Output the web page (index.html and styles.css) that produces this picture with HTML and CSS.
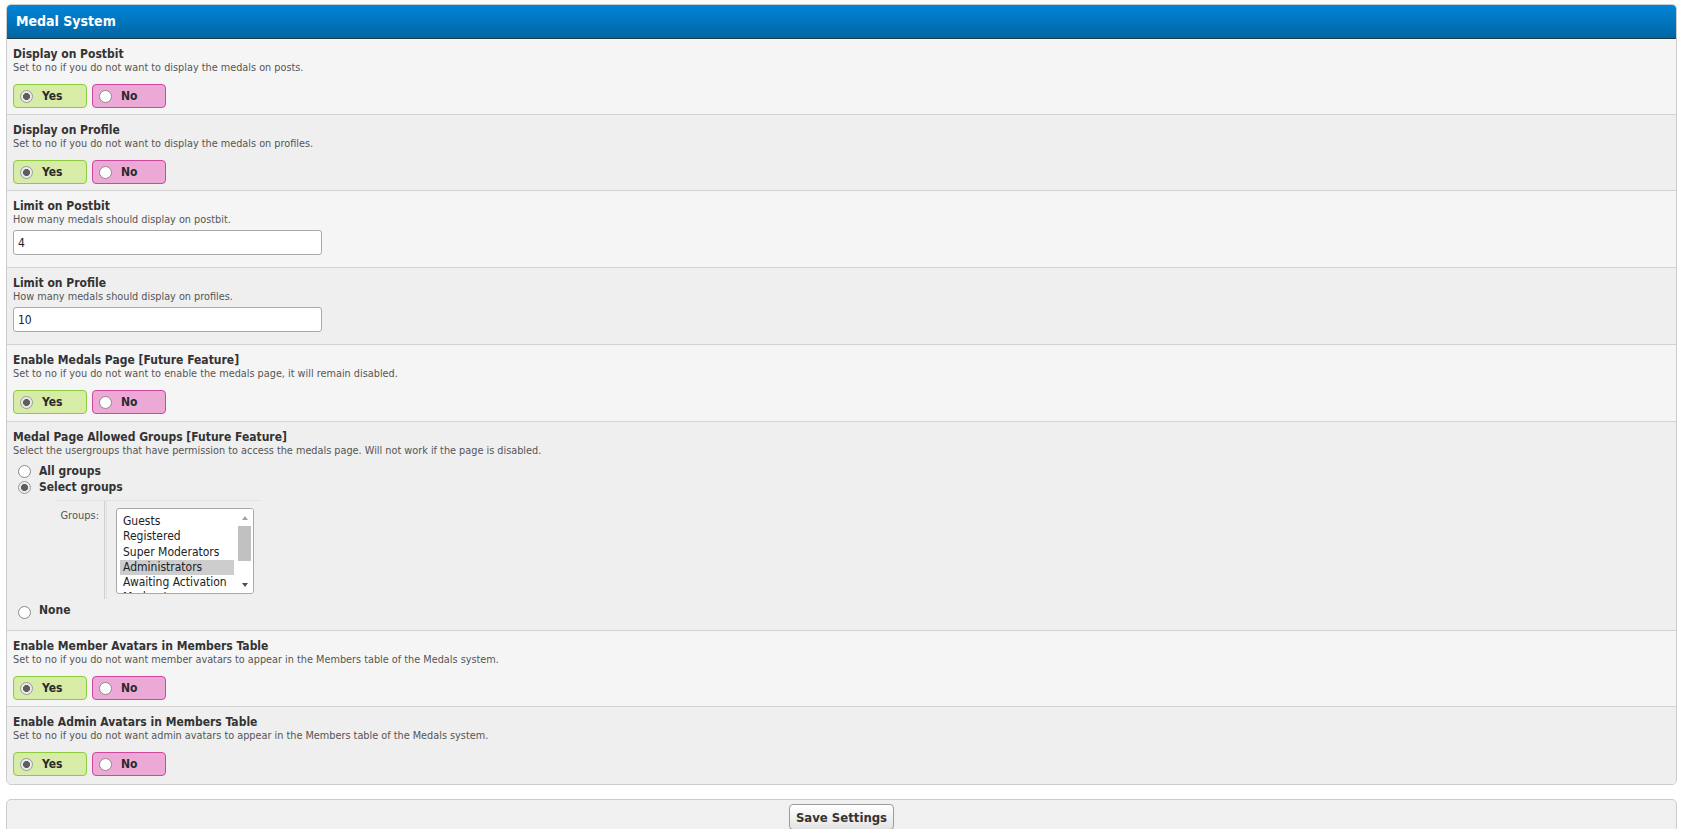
FILE: index.html
```html
<!DOCTYPE html>
<html>
<head>
<meta charset="utf-8">
<title>Medal System</title>
<link rel="stylesheet" href="styles.css">
</head>
<body>
<div class="page">
  <div class="panel">
    <div class="panel-head">Medal System</div>

    <div class="setting">
      <div class="s-title">Display on Postbit</div>
      <div class="s-desc">Set to no if you do not want to display the medals on posts.</div>
      <div class="yesno">
        <label class="opt yes"><span class="radio on"></span>Yes</label>
        <label class="opt no"><span class="radio"></span>No</label>
      </div>
    </div>

    <div class="setting alt">
      <div class="s-title">Display on Profile</div>
      <div class="s-desc">Set to no if you do not want to display the medals on profiles.</div>
      <div class="yesno">
        <label class="opt yes"><span class="radio on"></span>Yes</label>
        <label class="opt no"><span class="radio"></span>No</label>
      </div>
    </div>

    <div class="setting">
      <div class="s-title">Limit on Postbit</div>
      <div class="s-desc">How many medals should display on postbit.</div>
      <input class="text-input" type="text" value="4">
    </div>

    <div class="setting alt">
      <div class="s-title">Limit on Profile</div>
      <div class="s-desc">How many medals should display on profiles.</div>
      <input class="text-input" type="text" value="10">
    </div>

    <div class="setting tall">
      <div class="s-title">Enable Medals Page [Future Feature]</div>
      <div class="s-desc">Set to no if you do not want to enable the medals page, it will remain disabled.</div>
      <div class="yesno">
        <label class="opt yes"><span class="radio on"></span>Yes</label>
        <label class="opt no"><span class="radio"></span>No</label>
      </div>
    </div>

    <div class="setting alt groups-row">
      <div class="s-title">Medal Page Allowed Groups [Future Feature]</div>
      <div class="s-desc">Select the usergroups that have permission to access the medals page. Will not work if the page is disabled.</div>
      <div class="group-opts">
        <label class="gline"><span class="radio"></span>All groups</label>
        <label class="gline"><span class="radio on"></span>Select groups</label>
        <div class="gtable">
          <div class="glabel">Groups:</div>
          <div class="gsel-cell">
            <div class="listbox">
              <div class="opts">
                <div class="o">Guests</div>
                <div class="o">Registered</div>
                <div class="o">Super Moderators</div>
                <div class="o sel">Administrators</div>
                <div class="o">Awaiting Activation</div>
                <div class="o">Moderators</div>
              </div>
              <div class="sbar">
                <div class="arr"><span class="tri-up"></span></div>
                <div class="thumb"></div>
                <div class="sb-fill"></div>
                <div class="arr"><span class="tri-down"></span></div>
              </div>
            </div>
          </div>
        </div>
        <label class="gline none-line"><span class="radio low"></span>None</label>
      </div>
    </div>

    <div class="setting">
      <div class="s-title">Enable Member Avatars in Members Table</div>
      <div class="s-desc">Set to no if you do not want member avatars to appear in the Members table of the Medals system.</div>
      <div class="yesno">
        <label class="opt yes"><span class="radio on"></span>Yes</label>
        <label class="opt no"><span class="radio"></span>No</label>
      </div>
    </div>

    <div class="setting alt last">
      <div class="s-title">Enable Admin Avatars in Members Table</div>
      <div class="s-desc">Set to no if you do not want admin avatars to appear in the Members table of the Medals system.</div>
      <div class="yesno">
        <label class="opt yes"><span class="radio on"></span>Yes</label>
        <label class="opt no"><span class="radio"></span>No</label>
      </div>
    </div>
  </div>

  <div class="panel footer-panel">
    <button class="btn" type="button">Save Settings</button>
  </div>
</div>
</body>
</html>
```

FILE: styles.css
```css
* { box-sizing: border-box; }

body {
  margin: 0;
  background: #ffffff;
  font-family: "DejaVu Sans Condensed", "DejaVu Sans", sans-serif;
  color: #333333;
}

.page {
  padding: 4px 6px 0 6px;
}

.panel {
  border: 1px solid #cccccc;
  border-radius: 5px;
  overflow: hidden;
  background: #f5f5f5;
}

.panel-head {
  height: 34px;
  padding-left: 9px;
  background: linear-gradient(#0285d9, #0065a2);
  border-bottom: 1px solid #1d3a4b;
  color: #ffffff;
  font-weight: bold;
  font-size: 14px;
  line-height: 33px;
}

.setting {
  padding: 8px 6px 6px 6px;
  border-bottom: 1px solid #d3d3d3;
  background: #f5f5f5;
}

.setting.alt {
  background: #efefef;
}

.setting.tall {
  padding-bottom: 7px;
}

.setting.last {
  border-bottom: none;
  padding-bottom: 8px;
}

.s-title {
  font-weight: bold;
  font-size: 12px;
  line-height: 14px;
  color: #333333;
}

.s-desc {
  font-size: 10.8px;
  line-height: 14px;
  color: #555555;
}

.yesno {
  display: flex;
  gap: 5px;
  margin-top: 9px;
}

.opt {
  display: flex;
  align-items: center;
  width: 74px;
  height: 24px;
  padding-left: 6px;
  border-radius: 4px;
  font-weight: bold;
  font-size: 12px;
  color: #2a2a2a;
}

.opt .radio {
  margin-right: 9px;
}

.opt.yes {
  background: #d7eca6;
  border: 1px solid #8fcb3f;
}

.opt.no {
  background: #eda9d6;
  border: 1px solid #d0489d;
}

.radio {
  flex: none;
  display: inline-block;
  width: 13px;
  height: 13px;
  border-radius: 50%;
  border: 1px solid #8a8a8a;
  background: #ffffff;
}

.radio.on {
  border-color: #9a9a9a;
  background: radial-gradient(circle, #5e5e5e 0, #5e5e5e 3.2px, #ececec 3.8px);
}

.text-input {
  display: block;
  width: 309px;
  height: 25px;
  margin: 3px 0 6px 0;
  padding: 0 4px;
  border: 1px solid #a9a9a9;
  border-radius: 3px;
  background: #ffffff;
  font-family: "DejaVu Sans Condensed", "DejaVu Sans", sans-serif;
  font-size: 12px;
  color: #222222;
  outline: none;
}

/* groups row */
.groups-row {
  padding-bottom: 12px;
}

.group-opts {
  margin-top: 5px;
}

.gline {
  display: flex;
  align-items: center;
  height: 16px;
  font-weight: bold;
  font-size: 12px;
  color: #333333;
}

.gline .radio {
  margin: 0 8px 0 5px;
}

.gline .radio.low {
  margin-top: 5px;
}

.none-line {
  margin-top: 3px;
}

.gtable {
  display: flex;
  width: 205px;
  height: 99px;
  margin: 5px 0 0 43px;
  border-top: 1px solid #e3e3e3;
}

.glabel {
  width: 49px;
  padding: 8px 5px 0 0;
  border-right: 1px solid #cfcfcf;
  text-align: right;
  font-size: 11px;
  line-height: 14px;
  color: #555555;
}

.gsel-cell {
  flex: 1;
  margin-left: 1px;
  padding: 7px 0 0 9px;
  border-left: 1px solid #e0e0e0;
}

.listbox {
  display: flex;
  width: 138px;
  height: 86px;
  border: 1px solid #a9a9a9;
  border-radius: 3px;
  background: #ffffff;
  overflow: hidden;
}

.opts {
  flex: 1;
  padding: 5px 3px 0 3px;
  overflow: hidden;
}

.o {
  height: 15.3px;
  line-height: 15.3px;
  padding-left: 3px;
  font-size: 12px;
  color: #222222;
  white-space: nowrap;
}

.o.sel {
  background: #cdcdcd;
}

.sbar {
  display: flex;
  flex-direction: column;
  width: 16px;
  background: #ffffff;
}

.arr {
  height: 17px;
  display: flex;
  align-items: center;
  justify-content: center;
}

.tri-up {
  width: 0;
  height: 0;
  border-left: 3.5px solid transparent;
  border-right: 3.5px solid transparent;
  border-bottom: 4px solid #a3a3a3;
}

.tri-down {
  width: 0;
  height: 0;
  border-left: 3.5px solid transparent;
  border-right: 3.5px solid transparent;
  border-top: 4px solid #505050;
}

.thumb {
  height: 35px;
  width: 13px;
  margin-left: 1px;
  background: #c1c1c1;
}

.sb-fill {
  flex: 1;
}

/* footer */
.footer-panel {
  margin-top: 14px;
  padding: 4px 0 10px 0;
  background: #f0f0f0;
  text-align: center;
}

.btn {
  height: 26px;
  padding: 0 6px;
  border: 1px solid #9c9c9c;
  border-radius: 4px;
  background: linear-gradient(#ffffff, #e4e4e4);
  font-family: "DejaVu Sans Condensed", "DejaVu Sans", sans-serif;
  font-weight: bold;
  font-size: 13px;
  color: #333333;
}
```
